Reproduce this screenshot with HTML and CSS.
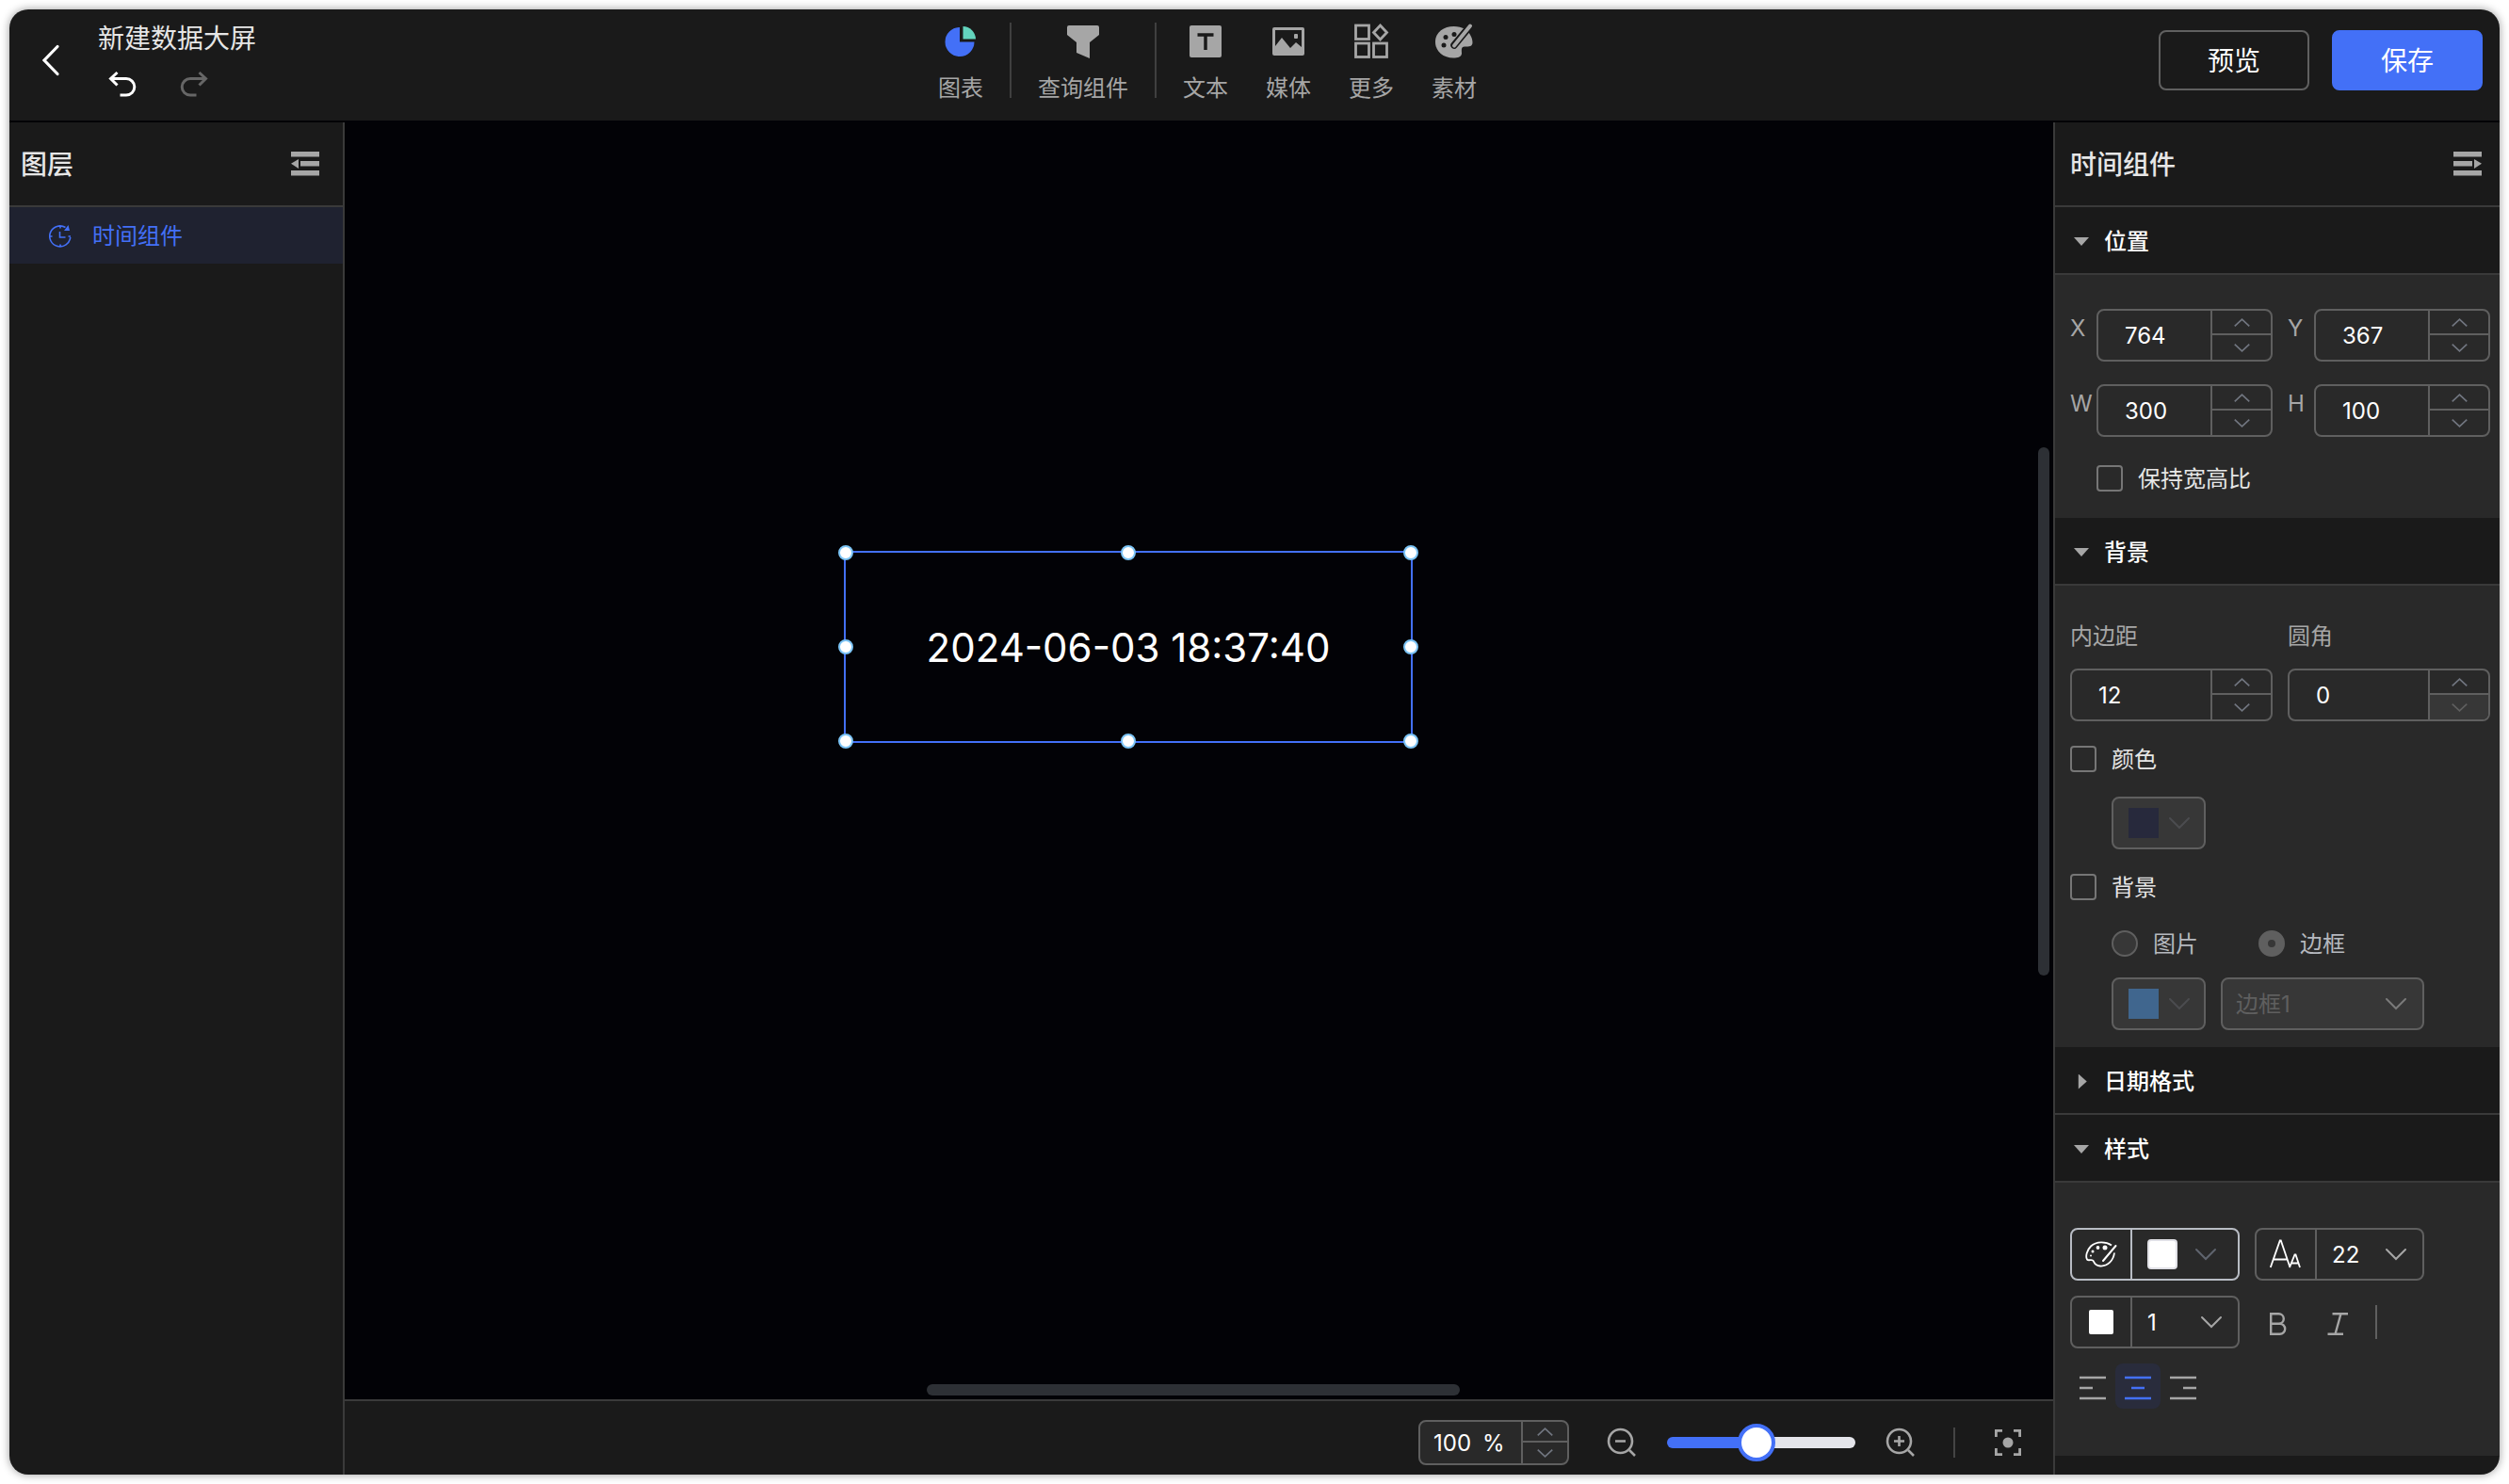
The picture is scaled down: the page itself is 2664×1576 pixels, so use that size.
FILE: index.html
```html
<!DOCTYPE html>
<html lang="zh-CN">
<head>
<meta charset="utf-8">
<title>新建数据大屏</title>
<link rel="stylesheet" href="styles.css">
</head>
<body>
<svg class="defs" aria-hidden="true">
  <symbol id="up" viewBox="0 0 16 8"><path d="M0.7 7.6 8 0.9l7.3 6.7" fill="none" stroke="currentColor" stroke-width="1.6"/></symbol>
  <symbol id="down" viewBox="0 0 16 8"><path d="M0.7 0.4 8 7.1l7.3-6.7" fill="none" stroke="currentColor" stroke-width="1.6"/></symbol>
  <symbol id="chevron" viewBox="0 0 24 14"><path d="M2 2l10 10L22 2" fill="none" stroke="currentColor" stroke-width="2" stroke-linecap="round"/></symbol>
</svg>
<div class="app">
  <header class="topbar">
    <div class="topbar-left">
      <button class="icon-btn back" aria-label="返回"><svg width="22" height="36" viewBox="0 0 22 36"><path d="M18 3.500L4 18l14 14.500" fill="none" stroke="#fff" stroke-width="3.200" stroke-linecap="round"/></svg></button>
      <div class="title-block">
        <h1 class="title">新建数据大屏</h1>
        <div class="history">
          <button class="icon-btn" aria-label="撤销"><svg width="32" height="30" viewBox="0 0 32 30"><path d="M10.500 3L3.500 9.500l7 7M3.500 9.500H20a8.700 8.700 0 0 1 0 17.600h-6.500" fill="none" stroke="#fff" stroke-width="3"/></svg></button>
          <button class="icon-btn" aria-label="重做" disabled><svg width="32" height="30" viewBox="0 0 32 30"><path d="M21.500 3l7 6.500-7 7M28.500 9.500H12a8.700 8.700 0 0 0 0 17.600h6.500" fill="none" stroke="#666" stroke-width="3"/></svg></button>
        </div>
      </div>
    </div>
    <nav class="tools">
      <button class="tool"><svg width="40" height="40" viewBox="0 0 40 40"><path d="M19 5v15.500h15.500A15.500 15.500 0 1 1 19 5z" fill="#4370f7"/><path d="M22.500 4a14 14 0 0 1 13.500 13.500H22.500z" fill="#63d4bd"/></svg>图表</button>
      <span class="tool-sep"></span>
      <button class="tool"><svg width="40" height="40" viewBox="0 0 40 40"><path d="M5 3h30q2 0 2 2v8l-10 8v17l-14-6V21L3 13V5q0-2 2-2z" fill="#a6a6a6"/></svg>查询组件</button>
      <span class="tool-sep"></span>
      <div class="tool-group">
        <button class="tool"><svg width="40" height="40" viewBox="0 0 40 40"><rect x="3" y="3" width="34" height="34" rx="2" fill="#a6a6a6"/><path d="M11.500 13h17M20 13v16" fill="none" stroke="#1a1a1a" stroke-width="3.500"/></svg>文本</button>
        <button class="tool"><svg width="40" height="40" viewBox="0 0 40 40"><path fill-rule="evenodd" d="M5 5h30q2 0 2 2v26q0 2-2 2H5q-2 0-2-2V7q0-2 2-2zM6 8v17l7-9 9 11 6-6 6 5V8z" fill="#a6a6a6"/><rect x="26" y="12" width="4" height="5" rx="1" fill="#a6a6a6"/></svg>媒体</button>
        <button class="tool"><svg width="40" height="40" viewBox="0 0 40 40"><g fill="none" stroke="#a6a6a6" stroke-width="2.800"><rect x="3.500" y="3" width="14" height="14.500"/><rect x="3.500" y="22" width="14" height="14.500"/><rect x="22.500" y="22" width="14" height="14.500"/><path d="M29.500 3l7 7.500-7 7.500-7-7.500z"/></g></svg>更多</button>
        <button class="tool"><svg width="40" height="40" viewBox="0 0 40 40"><path d="M32 7C18 0 0 6 0 20.500 0 31 9 37.500 19 37.500c5 0 9-1 9-5 0-3-1-7 3-7 5 0 8.500 0 8.500-4.500 0-5-3-10-7.500-14z" fill="#a6a6a6"/><g fill="#1a1a1a"><circle cx="11" cy="15.500" r="2.500"/><circle cx="20" cy="12.500" r="2.500"/><circle cx="9" cy="24" r="2.500"/></g><path d="M37.500 3L20 24" stroke="#1a1a1a" stroke-width="7.500" stroke-linecap="round"/><path d="M37 3.500L20 24.500" stroke="#a6a6a6" stroke-width="4" stroke-linecap="round"/></svg>素材</button>
      </div>
    </nav>
    <div class="actions">
      <button class="btn">预览</button>
      <button class="btn primary">保存</button>
    </div>
  </header>

  <aside class="layers">
    <div class="panel-head">
      <h2>图层</h2>
      <button class="icon-btn" aria-label="收起图层"><svg width="30" height="26" viewBox="0 0 30 26" fill="#a6a6a6"><path d="M0 0h30v5.500H0zM10 10h20v5.500H10zM0 20h30v5.500H0zM0 12.800L8 8v10z"/></svg></button>
    </div>
    <ul class="layer-list">
      <li><a class="layer" href="#clock"><svg width="24" height="24" viewBox="0 0 24 24" fill="none" stroke="#4370f7" stroke-width="1.600"><path d="M22.700 13A11 11 0 1 1 17.500 2.500M11.500 7v6h6M12 1v2.500M12 20.500V23M1 12h2.500M20.500 12H23"/><path d="M20.500 0l1.500 6h-6z" fill="#4370f7" stroke="none"/></svg>时间组件</a></li>
    </ul>
  </aside>

  <main class="stage">
    <div class="canvas">
      <div class="widget" id="clock">
        <time>2024-06-03 18:37:40</time>
        <i class="h nw"></i><i class="h n"></i><i class="h ne"></i><i class="h w"></i><i class="h e"></i><i class="h sw"></i><i class="h s"></i><i class="h se"></i>
      </div>
      <span class="bar-v"></span>
      <span class="bar-h"></span>
    </div>
    <footer class="zoombar">
      <div class="spin small">
        <label class="percent"><input type="text" value="100" aria-label="缩放比例">%</label>
        <div class="steps"><button aria-label="增加"><svg><use href="#up"/></svg></button><button aria-label="减少"><svg><use href="#down"/></svg></button></div>
      </div>
      <button class="icon-btn zoom" aria-label="缩小"><svg width="32" height="32" viewBox="0 0 32 32" fill="none" stroke="#a6a6a6" stroke-width="2.600"><circle cx="14.500" cy="14.500" r="12.500"/><path d="M9 14.500h11M24 24l6 6"/></svg></button>
      <input class="slider" type="range" min="0" max="160" value="75" aria-label="缩放">
      <button class="icon-btn zoom" aria-label="放大"><svg width="32" height="32" viewBox="0 0 32 32" fill="none" stroke="#a6a6a6" stroke-width="2.600"><circle cx="14.500" cy="14.500" r="12.500"/><path d="M9 14.500h11M14.500 9v11M24 24l6 6"/></svg></button>
      <span class="zoom-sep"></span>
      <button class="icon-btn fit" aria-label="适应画布"><svg width="28" height="28" viewBox="0 0 28 28" fill="none" stroke="#a6a6a6" stroke-width="2.800"><path d="M1.400 8V1.400H8M20 1.400h6.600V8M26.600 20v6.600H20M8 26.600H1.400V20"/><circle cx="14" cy="14" r="5.500" fill="#a6a6a6" stroke="none"/></svg></button>
    </footer>
  </main>

  <aside class="props">
    <div class="panel-head">
      <h2>时间组件</h2>
      <button class="icon-btn" aria-label="收起属性"><svg width="30" height="26" viewBox="0 0 30 26" fill="#a6a6a6"><path d="M0 0h30v5.500H0zM0 10h20v5.500H0zM0 20h30v5.500H0zM30 12.800L22 8v10z"/></svg></button>
    </div>

    <button class="section-head"><span class="tri"></span>位置</button>
    <section class="section position">
      <div class="pair">
        <div class="field inline"><label for="px">X</label><div class="spin"><input id="px" type="text" value="764"><div class="steps"><button aria-label="增加"><svg><use href="#up"/></svg></button><button aria-label="减少"><svg><use href="#down"/></svg></button></div></div></div>
        <div class="field inline"><label for="py">Y</label><div class="spin"><input id="py" type="text" value="367"><div class="steps"><button aria-label="增加"><svg><use href="#up"/></svg></button><button aria-label="减少"><svg><use href="#down"/></svg></button></div></div></div>
        <div class="field inline"><label for="pw">W</label><div class="spin"><input id="pw" type="text" value="300"><div class="steps"><button aria-label="增加"><svg><use href="#up"/></svg></button><button aria-label="减少"><svg><use href="#down"/></svg></button></div></div></div>
        <div class="field inline"><label for="ph">H</label><div class="spin"><input id="ph" type="text" value="100"><div class="steps"><button aria-label="增加"><svg><use href="#up"/></svg></button><button aria-label="减少"><svg><use href="#down"/></svg></button></div></div></div>
      </div>
      <label class="check inset"><input type="checkbox"><span>保持宽高比</span></label>
    </section>

    <button class="section-head"><span class="tri"></span>背景</button>
    <section class="section background">
      <div class="pair">
        <div class="field"><label for="pad">内边距</label><div class="spin"><input id="pad" type="text" value="12"><div class="steps"><button aria-label="增加"><svg><use href="#up"/></svg></button><button aria-label="减少"><svg><use href="#down"/></svg></button></div></div></div>
        <div class="field"><label for="rad">圆角</label><div class="spin"><input id="rad" type="text" value="0"><div class="steps"><button aria-label="增加"><svg><use href="#up"/></svg></button><button aria-label="减少" disabled><svg><use href="#down"/></svg></button></div></div></div>
      </div>
      <label class="check"><input type="checkbox"><span>颜色</span></label>
      <button class="picker indent" disabled aria-label="背景颜色"><span class="swatch navy"></span><svg class="chev"><use href="#chevron"/></svg></button>
      <label class="check"><input type="checkbox"><span>背景</span></label>
      <div class="bg-options indent">
        <div class="radios">
          <label class="radio"><input type="radio" name="bg" disabled><span>图片</span></label>
          <label class="radio"><input type="radio" name="bg" checked disabled><span>边框</span></label>
        </div>
        <div class="row">
          <button class="picker" disabled aria-label="边框颜色"><span class="swatch blue"></span><svg class="chev"><use href="#chevron"/></svg></button>
          <div class="select wide disabled"><select disabled aria-label="边框样式"><option>边框1</option></select><svg class="chev"><use href="#chevron"/></svg></div>
        </div>
      </div>
    </section>

    <button class="section-head"><span class="tri closed"></span>日期格式</button>
    <button class="section-head"><span class="tri"></span>样式</button>
    <section class="section style">
      <div class="row">
        <button class="combo active" aria-label="文字颜色">
          <span class="lead"><svg width="34" height="28" viewBox="0 0 34 28"><path d="M28 4.500C22 .5 12 0 6 5.500 2 9.500 0 16 2 19.500c2 2 4-.5 6 1 2 1 1 5.500 8 6 8 .5 14-6 15-14" fill="none" stroke="#fff" stroke-width="1.800"/><path d="M32.500 5L19 21" stroke="#fff" stroke-width="2" stroke-linecap="round"/><g fill="#fff"><circle cx="21" cy="7" r="2.500"/><circle cx="13.500" cy="7" r="1.900"/><circle cx="8" cy="11" r="1.500"/><circle cx="6" cy="15.500" r="1"/></g></svg></span>
          <span class="tail"><span class="swatch white"></span><svg class="chev slate"><use href="#chevron"/></svg></span>
        </button>
        <div class="combo">
          <span class="lead"><svg width="34" height="32" viewBox="0 0 34 32" fill="none" stroke="#fff" stroke-width="1.800"><path d="M.8 30L10.800 1.500h1L21.500 30M4.300 21.500h13.500M21 30l5.500-13.500h1L32 30M23 25.500h7.500"/></svg></span>
          <div class="select"><select aria-label="字号"><option>22</option></select><svg class="chev"><use href="#chevron"/></svg></div>
        </div>
      </div>
      <div class="row">
        <div class="combo">
          <span class="lead"><span class="swatch stroke"></span></span>
          <div class="select"><select aria-label="描边"><option>1</option></select><svg class="chev"><use href="#chevron"/></svg></div>
        </div>
        <button class="fmt" aria-label="加粗"><svg width="28" height="28" viewBox="0 0 28 28" fill="none" stroke="#a6a6a6" stroke-width="2.400"><path d="M7.200 3.200h8.300a5 5 0 0 1 0 10.600H7.200zM7.200 13.800h9.500a5.200 5.200 0 0 1 0 11H7.200z"/></svg></button>
        <button class="fmt" aria-label="斜体"><svg width="28" height="28" viewBox="0 0 28 28" fill="none" stroke="#a6a6a6" stroke-width="2.400"><path d="M8.500 3.200H25M3.500 24.800H20M17.500 3.200L11.500 24.800"/></svg></button>
        <span class="fmt-sep"></span>
      </div>
      <div class="align">
        <button class="fmt" aria-label="左对齐"><svg width="28" height="26" viewBox="0 0 28 26" stroke="currentColor" stroke-width="2.600"><path d="M0 2h28M0 13h14M0 24h28"/></svg></button>
        <button class="fmt on" aria-label="居中"><svg width="28" height="26" viewBox="0 0 28 26" stroke="currentColor" stroke-width="2.600"><path d="M0 2h28M7 13h14M0 24h28"/></svg></button>
        <button class="fmt" aria-label="右对齐"><svg width="28" height="26" viewBox="0 0 28 26" stroke="currentColor" stroke-width="2.600"><path d="M0 2h28M14 13h14M0 24h28"/></svg></button>
      </div>
    </section>
  </aside>
</div>
</body>
</html>
```
FILE: styles.css
```css
* { box-sizing: border-box; }

body {
  margin: 0;
  padding: 10px;
  min-height: 100vh;
  display: flex;
  background: #fff;
  color: #e6e6e6;
  font: 24px/36px Inter, "Noto Sans CJK SC", sans-serif;
}

button, input, select { font: inherit; color: inherit; margin: 0; }
button { padding: 0; border: 0; background: none; }
svg { display: block; flex: none; }
h1, h2 { margin: 0; font-size: 28px; line-height: 40px; }

.defs { position: absolute; width: 0; height: 0; }

.app {
  flex: 1;
  display: grid;
  grid-template: auto 1fr / 356px 1fr 474px;
  background: #1a1a1a;
  border-radius: 20px;
  overflow: hidden;
  box-shadow: 0 0 10px rgba(0, 0, 0, 0.4);
}

.icon-btn { display: flex; align-items: center; justify-content: center; }

/* top bar */
.topbar {
  grid-column: 1 / -1;
  display: grid;
  grid-template-columns: 1fr auto 1fr;
  height: 120px;
  padding: 0 18px 0 32px;
  border-bottom: 2px solid #020206;
}
.topbar-left { display: flex; gap: 38px; padding-top: 11px; }
.back { height: 86px; width: 24px; }
.title { font-weight: 400; }
.history { display: flex; gap: 44px; padding: 13px 10px; }
.tools { display: flex; gap: 28px; padding-top: 14px; margin-right: 114px; }
.tool-group { display: flex; gap: 40px; }
.tool {
  display: flex;
  flex-direction: column;
  align-items: center;
  align-self: flex-start;
  gap: 12px;
  color: #a6a6a6;
}
.tool svg { width: 40px; height: 40px; }
.tool-sep { width: 2px; height: 80px; background: #3f3f3f; }
.actions { display: flex; gap: 24px; justify-content: flex-end; padding-top: 22px; }
.btn {
  width: 160px;
  height: 64px;
  padding-top: 2px;
  border: 2px solid #606060;
  border-radius: 8px;
  font-size: 28px;
  color: #fff;
}
.primary { background: #4370f7; border-color: #4370f7; }

/* side panels */
.panel-head {
  display: flex;
  align-items: center;
  justify-content: space-between;
  height: 90px;
  padding: 0 19px 0 16px;
  border-bottom: 2px solid #3a3a3a;
}
.panel-head h2 { font-weight: 500; padding-top: 2px; }
.layers { border-right: 2px solid #3a3a3a; }
.layers .panel-head { padding: 0 25px 0 12px; }
.layer-list { margin: 0; padding: 0; list-style: none; }
.layer {
  display: flex;
  align-items: center;
  gap: 22px;
  height: 60px;
  padding: 2px 0 0 42px;
  background: #1f2230;
  color: #4370f7;
  text-decoration: none;
}

/* canvas */
.stage { display: flex; flex-direction: column; }
.canvas { position: relative; flex: 1; background: #020206; overflow: hidden; }
.widget {
  position: absolute;
  left: 530px;
  top: 455px;
  width: 604px;
  height: 204px;
  padding-top: 2px;
  display: flex;
  align-items: center;
  justify-content: center;
  border: 2px solid #4370f7;
  color: #fff;
  font-size: 42px;
  line-height: 60px;
}
.h {
  position: absolute;
  width: 16px;
  height: 16px;
  margin: -8px;
  background: #fff;
  border: 2px solid #7cc4f5;
  border-radius: 50%;
}
.nw, .w, .sw { left: 0; }
.n, .s { left: 50%; }
.ne, .e, .se { left: 100%; }
.nw, .n, .ne { top: 0; }
.w, .e { top: 50%; }
.sw, .s, .se { top: 100%; }
.bar-v, .bar-h { position: absolute; border-radius: 6px; background: #2d3035; }
.bar-v { right: 4px; top: 345px; width: 12px; height: 561px; }
.bar-h { left: 618px; bottom: 4px; width: 566px; height: 12px; }

.zoombar {
  display: flex;
  align-items: center;
  justify-content: flex-end;
  height: 80px;
  padding: 10px 34px 0 0;
  border-top: 2px solid #3a3a3a;
}
.zoom { width: 32px; height: 32px; }
.spin + .zoom { margin-left: 40px; }
.zoom-sep { width: 2px; height: 32px; margin: 0 42px 0 40px; background: #444; }
.slider {
  appearance: none;
  width: 200px;
  height: 12px;
  margin: 0 32px;
  border-radius: 6px;
  background: linear-gradient(to right, #4370f7 48%, #e4e5ea 48%);
}
.slider::-webkit-slider-thumb {
  appearance: none;
  width: 40px;
  height: 40px;
  border: 4px solid #4370f7;
  border-radius: 50%;
  background: #fff;
}

/* number box */
.spin {
  display: grid;
  grid-template-columns: 1fr 64px;
  flex: 1;
  min-width: 0;
  height: 56px;
  border: 2px solid #5f5f5f;
  border-radius: 8px;
  overflow: hidden;
}
.spin input {
  min-width: 0;
  width: 100%;
  padding: 2px 0 0 28px;
  border: 0;
  background: none;
  color: #fff;
}
.steps {
  display: grid;
  grid-template-rows: calc(50% - 2px) 1fr;
  border-left: 2px solid #5f5f5f;
  color: #70757f;
}
.steps button { display: flex; align-items: center; justify-content: center; color: inherit; }
.steps button + button { border-top: 2px solid #5f5f5f; }
.steps button:disabled { background: #373737; color: #5f5f5f; }
.steps svg { width: 17px; height: 9px; }
.small { flex: none; width: 160px; height: 48px; grid-template-columns: 1fr 49px; background: #292929; }
.percent { display: flex; align-items: center; padding-top: 2px; color: #fff; }
.percent input { width: 66px; padding: 0 0 0 14px; }

/* properties */
.props { border-left: 2px solid #3a3a3a; }
.section-head {
  display: flex;
  align-items: center;
  gap: 16px;
  width: 100%;
  height: 72px;
  padding: 3px 0 0 20px;
  border-bottom: 2px solid #3a3a3a;
  color: #fff;
  font-weight: 500;
}
.tri { width: 16px; height: 9px; background: #a6a6a6; clip-path: polygon(0 0, 100% 0, 50% 100%); }
.closed { height: 16px; clip-path: polygon(30% 0, 86% 50%, 30% 100%); }
.section { display: flex; flex-direction: column; padding: 36px 10px 18px 16px; background: #292929; }
.position { gap: 24px; padding-bottom: 22px; }
.background { gap: 20px; }
.style { gap: 16px; padding-top: 48px; padding-bottom: 50px; }
.pair { display: grid; grid-template-columns: 1fr 1fr; gap: 24px 16px; }
.field { display: flex; flex-direction: column; gap: 16px; color: #a6a6a6; }
.field .spin { flex: none; }
.inline { flex-direction: row; gap: 0; }
.inline .spin { flex: 1; }
.inline label { width: 28px; line-height: 42px; }
.check, .radio { display: flex; align-items: center; gap: 16px; height: 40px; }
.check span, .radio span { padding-top: 2px; }
.inset { padding-left: 28px; }
.indent { margin-left: 44px; }
.check input, .radio input {
  appearance: none;
  width: 28px;
  height: 28px;
  border: 2px solid #767676;
  border-radius: 4px;
}
.radios { display: flex; gap: 64px; }
.radio { color: #b5b8be; }
.radio input { border-color: #5f5f5f; border-radius: 50%; background: #373737; }
.radio input:checked { border: 10px solid #5f5f5f; }
.bg-options { display: flex; flex-direction: column; gap: 16px; }
.row { display: flex; gap: 16px; align-items: center; }
.picker {
  display: flex;
  align-items: center;
  gap: 10px;
  width: 100px;
  height: 56px;
  padding-left: 16px;
  border: 2px solid #5f5f5f;
  border-radius: 8px;
  background: #373737;
  color: #4b4c4f;
}
.swatch { width: 32px; height: 32px; }
.navy { background: #27293c; }
.blue { background: #40668e; }
.white { background: #fff; border: 2px solid #e0e0e6; border-radius: 4px; }
.stroke { width: 26px; height: 26px; background: #fff; border-radius: 2px; }
.chev { width: 24px; height: 14px; color: #a6a6a6; }
.picker .chev { color: inherit; }
.select { flex: 1; display: grid; grid-template-columns: 1fr 34px; align-items: center; }
.select select {
  grid-area: 1 / 1 / 2 / 3;
  appearance: none;
  width: 100%;
  height: 52px;
  padding: 2px 0 0 16px;
  border: 0;
  background: none;
  color: #fff;
}
.select .chev { grid-area: 1 / 2; pointer-events: none; margin-left: -6px; }
.wide { flex: none; width: 216px; border: 2px solid #5f5f5f; border-radius: 8px; background: #373737; }
.wide select { padding-left: 14px; }
.disabled select { color: #5f5f5f; opacity: 1; }
.disabled .chev { color: #7a7a7a; }
.combo { display: flex; width: 180px; height: 56px; border: 2px solid #5f5f5f; border-radius: 8px; }
.lead {
  display: flex;
  align-items: center;
  justify-content: center;
  width: 64px;
  border-right: 2px solid #5f5f5f;
}
.tail { display: flex; align-items: center; gap: 18px; padding-left: 16px; }
.active, .active .lead { border-color: #b8bcc4; }
.combo.active { align-items: stretch; }
.slate { color: #5f646e; }
.fmt {
  display: flex;
  align-items: center;
  justify-content: center;
  width: 48px;
  height: 48px;
  padding-top: 4px;
  border-radius: 8px;
  color: #a6a6a6;
}
.on { background: #292c3c; color: #4370f7; }
.fmt-sep { width: 2px; height: 36px; background: #5f5f5f; }
.align { display: flex; }
```
